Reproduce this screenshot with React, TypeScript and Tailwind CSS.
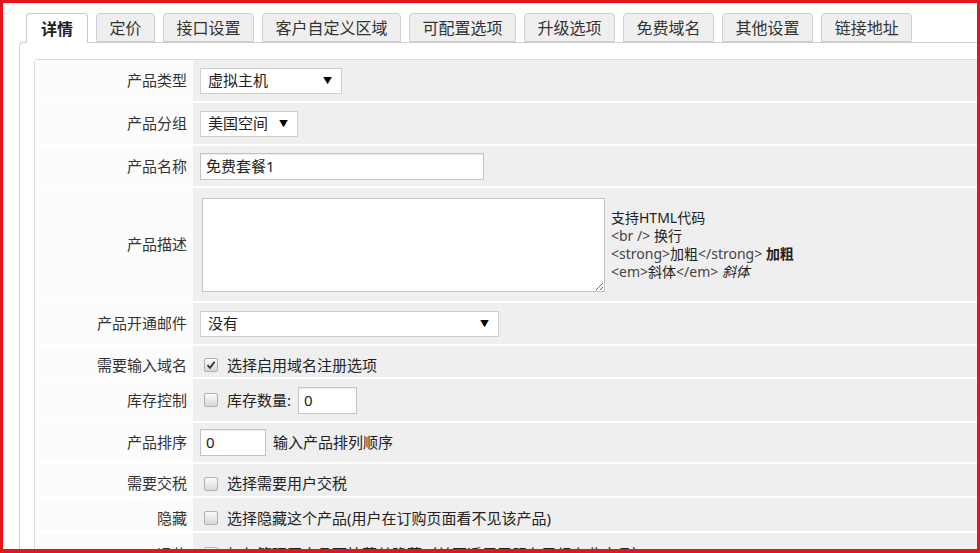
import type { ReactNode } from 'react';

const tabs = ['详情', '定价', '接口设置', '客户自定义区域', '可配置选项', '升级选项', '免费域名', '其他设置', '链接地址'];

function Select({ value, width }: { value: string; width: string }) {
  return (
    <div className={`${width} h-[26px] bg-white border border-[#cfcfcf] flex items-center justify-between pl-[7px] pr-[9px] text-[15px] text-[#222]`}>
      <span>{value}</span>
      <span className="text-[9px] text-black">▼</span>
    </div>
  );
}

function TextBox({ value, width }: { value: string; width: string }) {
  return (
    <div className={`${width} h-[27px] bg-white border border-[#c4c4c4] shadow-[inset_0_1px_1px_rgba(0,0,0,0.08)] flex items-center px-[5px] text-[15px] text-[#222]`}>
      {value}
    </div>
  );
}

function Check({ checked }: { checked?: boolean }) {
  return (
    <span className="w-[14px] h-[14px] shrink-0 rounded-[2px] border border-[#b0b0b0] bg-gradient-to-b from-[#fbfbfb] to-[#d8d8d8] flex items-center justify-center">
      {checked && (
        <svg width="10" height="10" viewBox="0 0 10 10">
          <path d="M1.5 5.2 L4 7.8 L8.6 1.8" fill="none" stroke="#333" strokeWidth="1.8" />
        </svg>
      )}
    </span>
  );
}

function Row({ label, h, children, low }: { label: string; h: string; children: ReactNode; low?: boolean }) {
  return (
    <div className={`flex ${h}`}>
      <div className={`w-[158px] shrink-0 bg-[#fcfcfc] flex items-center justify-end pr-[6px] text-[15px] text-[#333] ${low ? 'pt-[7px]' : ''}`}>
        {label}
      </div>
      <div className={`flex-1 bg-[#efefef] flex items-center pl-[7px] text-[15px] text-[#222] ${low ? 'pt-[7px]' : ''}`}>
        {children}
      </div>
    </div>
  );
}

export default function App() {
  return (
    <div
      className="w-[980px] h-[553px] overflow-hidden border-[3px] border-b-[4px] border-[#e3161b] bg-white"
      style={{ fontFamily: '"Noto Sans", "Noto Sans CJK SC", sans-serif' }}
    >
      <div className="ml-[16px] mt-[10px] w-[980px]">
        {/* Tabs */}
        <div className="flex gap-[8px] pl-[7px] relative z-10">
          {tabs.map((t, i) =>
            i === 0 ? (
              <div key={t} className="h-[30px] px-[14px] flex items-center bg-white border border-b-0 border-[#c8c8c8] rounded-t-[4px] text-[16px] font-bold text-[#222]">
                {t}
              </div>
            ) : (
              <div key={t} className="h-[29px] px-[12.5px] flex items-center bg-[#efefef] border border-[#cfcfcf] rounded-t-[4px] text-[16px] text-[#333]">
                {t}
              </div>
            )
          )}
        </div>

        {/* Panel */}
        <div className="-mt-px border-l border-t border-[#cfcfcf] rounded-tl-[4px] bg-white pl-[14px] pt-[16px] h-[520px]">
          <div className="border border-[#dcdcdc] rounded-[3px] bg-white flex flex-col gap-[2px]">
            <Row label="产品类型" h="h-[41px]">
              <Select value="虚拟主机" width="w-[142px]" />
            </Row>
            <Row label="产品分组" h="h-[41px]">
              <Select value="美国空间" width="w-[98px]" />
            </Row>
            <Row label="产品名称" h="h-[40px]">
              <TextBox value="免费套餐1" width="w-[284px]" />
            </Row>
            <Row label="产品描述" h="h-[113px]">
              <textarea className="ml-[2px] w-[403px] h-[94px] bg-white border border-[#c4c4c4] outline-none" />
              <div className="ml-[6px] text-[14px] leading-[18px] text-[#222]">
                <div>支持HTML代码</div>
                <div><span className="text-[#444]">&lt;br /&gt;</span> 换行</div>
                <div><span className="text-[#444]">&lt;strong&gt;</span>加粗<span className="text-[#444]">&lt;/strong&gt;</span> <b>加粗</b></div>
                <div><span className="text-[#444]">&lt;em&gt;</span>斜体<span className="text-[#444]">&lt;/em&gt;</span> <i>斜体</i></div>
              </div>
            </Row>
            <Row label="产品开通邮件" h="h-[41px]">
              <Select value="没有" width="w-[299px]" />
            </Row>
            <Row label="需要输入域名" h="h-[31px]" low>
              <span className="ml-[4px]"><Check checked /></span>
              <span className="ml-[9px]">选择启用域名注册选项</span>
            </Row>
            <Row label="库存控制" h="h-[42px]">
              <span className="ml-[4px]"><Check /></span>
              <span className="ml-[9px]">库存数量:</span>
              <span className="ml-[7px]"><TextBox value="0" width="w-[59px]" /></span>
            </Row>
            <Row label="产品排序" h="h-[39px]">
              <TextBox value="0" width="w-[66px]" />
              <span className="ml-[7px]">输入产品排列顺序</span>
            </Row>
            <Row label="需要交税" h="h-[32px]" low>
              <span className="ml-[4px]"><Check /></span>
              <span className="ml-[9px]">选择需要用户交税</span>
            </Row>
            <Row label="隐藏" h="h-[33px]" low>
              <span className="ml-[4px]"><Check /></span>
              <span className="ml-[9px]">选择隐藏这个产品(用户在订购页面看不见该产品)</span>
            </Row>
            <Row label="退休" h="h-[35px]" low>
              <span className="ml-[4px]"><Check /></span>
              <span className="ml-[9px]">打勾管理区产品下拉菜单隐藏（并不适用于服务已经在此产品）</span>
            </Row>
          </div>
        </div>
      </div>
    </div>
  );
}
